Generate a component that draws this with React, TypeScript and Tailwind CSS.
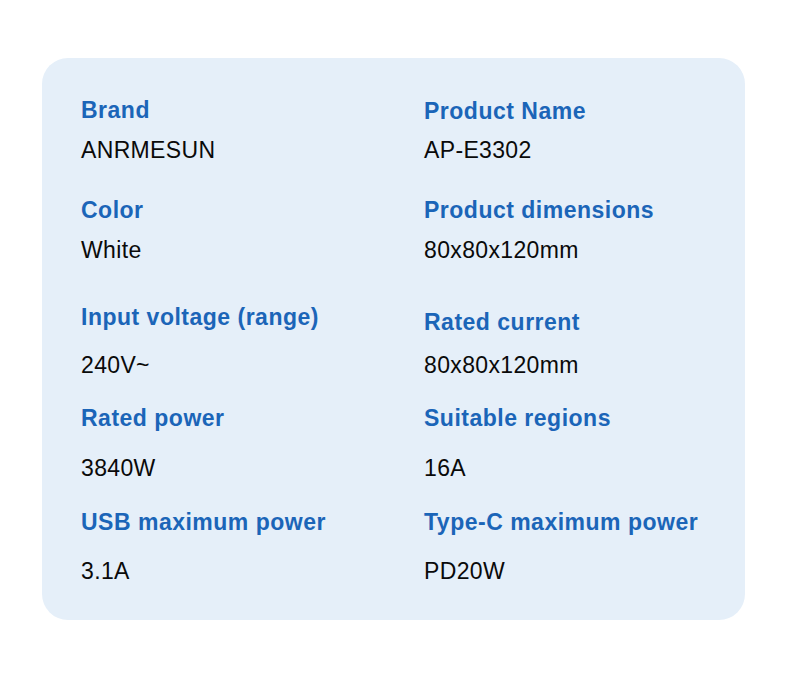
const FONT = { fontFamily: '"Liberation Sans", Arial, sans-serif' }

type Cell = { label: string; value: string; labelCls: string; valueCls: string }
type Row = { cls: string; cells: Cell[] }

const ROWS: Row[] = [
  {
    cls: 'mt-0',
    cells: [
      { label: 'Brand', value: 'ANRMESUN', labelCls: '', valueCls: 'mt-[10px]' },
      { label: 'Product Name', value: 'AP-E3302', labelCls: 'pt-px', valueCls: 'mt-[9px]' },
    ],
  },
  {
    cls: 'mt-[30px]',
    cells: [
      { label: 'Color', value: 'White', labelCls: '', valueCls: 'mt-[10px]' },
      { label: 'Product dimensions', value: '80x80x120mm', labelCls: '', valueCls: 'mt-[10px]' },
    ],
  },
  {
    cls: 'mt-[37px]',
    cells: [
      { label: 'Input voltage (range)', value: '240V~', labelCls: '', valueCls: 'mt-[18px]' },
      { label: 'Rated current', value: '80x80x120mm', labelCls: 'pt-[5px]', valueCls: 'mt-[13px]' },
    ],
  },
  {
    cls: 'mt-[23px]',
    cells: [
      { label: 'Rated power', value: '3840W', labelCls: '', valueCls: 'mt-[20px]' },
      { label: 'Suitable regions', value: '16A', labelCls: '', valueCls: 'mt-[20px]' },
    ],
  },
  {
    cls: 'mt-[24px]',
    cells: [
      { label: 'USB maximum power', value: '3.1A', labelCls: '', valueCls: 'mt-[19px]' },
      { label: 'Type-C maximum power', value: 'PD20W', labelCls: '', valueCls: 'mt-[19px]' },
    ],
  },
]

export default function App() {
  return (
    <div className="w-[790px] h-[675px] bg-white pt-[58px] pl-[42px]" style={FONT}>
      <div className="w-[703px] h-[562px] rounded-[26px] bg-[#e5eff9] pt-[37px] pl-[39px]">
        {ROWS.map((row, i) => (
          <div key={i} className={`grid grid-cols-[343px_1fr] ${row.cls}`}>
            {row.cells.map((c) => (
              <div key={c.label}>
                <div className={`text-[23px] leading-[30px] font-bold tracking-[0.5px] text-[#1b65b8] ${c.labelCls}`}>
                  {c.label}
                </div>
                <div className={`text-[23px] leading-[30px] tracking-[0.35px] text-[#0a0a0a] ${c.valueCls}`}>
                  {c.value}
                </div>
              </div>
            ))}
          </div>
        ))}
      </div>
    </div>
  )
}
